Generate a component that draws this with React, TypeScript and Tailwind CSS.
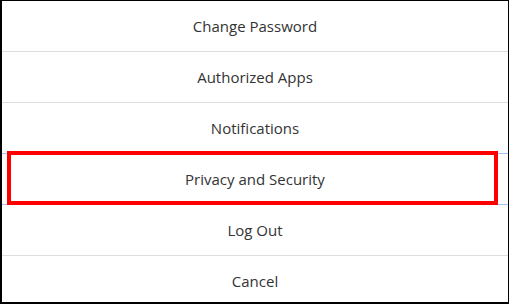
import React from 'react';

const items = ['Change Password', 'Authorized Apps', 'Notifications', 'Privacy and Security', 'Log Out', 'Cancel'];

export default function App() {
  return (
    <div
      className="relative h-screen w-full bg-white border-t border-l-2 border-r border-b-2 border-black flex flex-col text-[15px] text-[#333333]"
      style={{ fontFamily: '"Open Sans", "Noto Sans", sans-serif' }}
    >
      {items.map((label, i) => {
        const last = i === items.length - 1;
        const blue = i === 2 || i === 3;
        return (
          <div
            key={label}
            className={
              last
                ? 'flex-1 flex items-center justify-center pt-[4px]'
                : blue
                ? 'h-[51px] shrink-0 flex items-center justify-center border-b border-[#a4c2f4]'
                : 'h-[51px] shrink-0 flex items-center justify-center border-b border-[#dddddd]'
            }
          >
            <span>{label}</span>
          </div>
        );
      })}
      <div className="absolute left-[5px] top-[150px] w-[491px] h-[54px] border-4 border-[#ff0000] pointer-events-none" />
    </div>
  );
}
